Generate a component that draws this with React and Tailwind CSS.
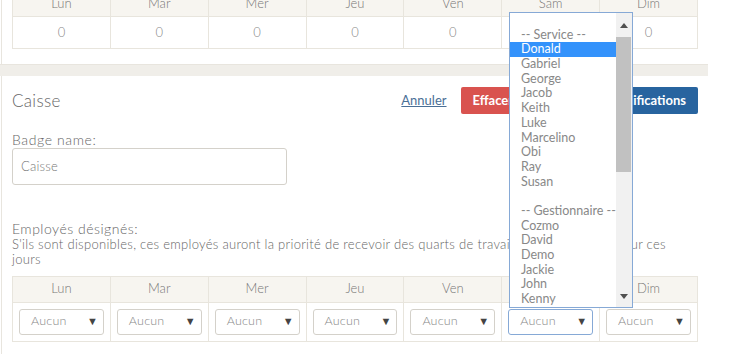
import React from "react";

const days = ["Lun", "Mar", "Mer", "Jeu", "Ven", "Sam", "Dim"];

const options = [
    "",
    "-- Service --",
    "Donald",
    "Gabriel",
    "George",
    "Jacob",
    "Keith",
    "Luke",
    "Marcelino",
    "Obi",
    "Ray",
    "Susan",
    "",
    "-- Gestionnaire --",
    "Cozmo",
    "David",
    "Demo",
    "Jackie",
    "John",
    "Kenny",
];

const font = { fontFamily: "Lato, 'Open Sans', sans-serif" };

const FakeSelect = ({ focused }) => (
    <div
        className={`h-[26px] flex items-center justify-between pl-[11px] pr-[5px] rounded-[3px] bg-white border ${
            focused ? "border-[#86a9d6]" : "border-[#d4d1ca]"
        }`}
    >
        <span className="text-[12.5px] text-[#888] tracking-[0.2px]">Aucun</span>
        <span className="text-[11px] text-[#444]">▼</span>
    </div>
);

const App = () => {
    return (
        <div
            className="relative w-[752px] h-[360px] overflow-hidden bg-white text-[#777] font-light"
            style={font}
        >
            <div className="w-[708px]">
                {/* carte du haut (coupée) */}
                <div className="ml-px border-l border-[#e8e5de] px-[10px] pb-[15px] -mt-[10px]">
                    <table className="w-full table-fixed border-collapse text-[13px]">
                        <thead>
                            <tr>
                                {days.map((d) => (
                                    <th
                                        key={d}
                                        className="h-[26px] font-light border border-[#e8e5dd] bg-[#f7f5f0] text-[#777]"
                                    >
                                        {d}
                                    </th>
                                ))}
                            </tr>
                        </thead>
                        <tbody>
                            <tr>
                                {days.map((d) => (
                                    <td
                                        key={d}
                                        className="h-[32px] text-center border border-[#e8e5dd] text-[#888]"
                                    >
                                        0
                                    </td>
                                ))}
                            </tr>
                        </tbody>
                    </table>
                </div>

                <div className="h-[12px] bg-[#f0eee9] border-t border-[#e8e5de]" />

                {/* carte Caisse */}
                <div className="ml-px border-l border-[#e8e5de] px-[10px] pt-[11px] pb-[12px]">
                    <div className="flex items-center justify-between h-[27px]">
                        <h2 className="text-[17px] text-[#666] tracking-[0.3px]">Caisse</h2>
                        <div className="flex items-center">
                            <a className="text-[13px] font-normal text-[#4a6f96] underline mr-[14px] cursor-pointer">
                                Annuler
                            </a>
                            <button className="h-[27px] px-3 rounded-[2px] bg-[#d9534f] text-white text-[13px] font-bold mr-1">
                                Effacer
                            </button>
                            <button className="h-[27px] px-3 rounded-[2px] bg-[#28649f] text-white text-[13px] font-bold">
                                Enregistrer modifications
                            </button>
                        </div>
                    </div>

                    <div className="mt-[17px] text-[14px] leading-[18px] text-[#666] tracking-[0.6px]">
                        Badge name:
                    </div>
                    <div className="w-[275px] h-[37px] mt-[-1px] border border-[#d4d1ca] rounded-[3px] flex items-center px-2 text-[13px] text-[#777] tracking-[0.2px]">
                        Caisse
                    </div>

                    <div className="mt-[36px] text-[13px] leading-[15.5px] text-[#666] tracking-[0.3px]">
                        <div className="text-[14px] tracking-[0.5px]">Employés désignés:</div>
                        <div>
                            S'ils sont disponibles, ces employés auront la priorité de recevoir des quarts de
                            travail de leurs badges, pour ces
                            <br />
                            jours
                        </div>
                    </div>

                    <table className="mt-[8px] w-full table-fixed border-collapse text-[13px]">
                        <thead>
                            <tr>
                                {days.map((d) => (
                                    <th
                                        key={d}
                                        className="h-[26px] font-light border border-[#e8e5dd] bg-[#f7f5f0] text-[#777]"
                                    >
                                        {d}
                                    </th>
                                ))}
                            </tr>
                        </thead>
                        <tbody>
                            <tr>
                                {days.map((d) => (
                                    <td key={d} className="h-[39px] px-[6px] border border-[#e8e5dd]">
                                        <FakeSelect focused={d === "Sam"} />
                                    </td>
                                ))}
                            </tr>
                        </tbody>
                    </table>
                </div>
            </div>

            {/* liste déroulante ouverte */}
            <div className="absolute left-[509px] top-[12px] w-[124px] h-[296px] bg-white border border-[#86a9d6] flex font-normal">
                <div className="flex-1">
                    {options.map((o, i) => (
                        <div
                            key={i}
                            className={`h-[14.7px] leading-[14.7px] pl-[11px] text-[12.5px] whitespace-nowrap ${
                                o === "Donald" ? "bg-[#3392fb] text-white" : "text-[#888]"
                            }`}
                        >
                            {o}
                        </div>
                    ))}
                </div>
                <div className="w-[17px] bg-[#f1f1f1] flex flex-col items-center">
                    <div className="h-[24px] flex items-center justify-center">
                        <svg width="8" height="5" viewBox="0 0 8 5">
                            <path d="M0 5 L4 0 L8 5 Z" fill="#505050" />
                        </svg>
                    </div>
                    <div className="w-[15px] h-[135px] bg-[#c1c1c1]" />
                    <div className="flex-1" />
                    <div className="h-[22px] flex items-center justify-center">
                        <svg width="8" height="5" viewBox="0 0 8 5">
                            <path d="M0 0 L8 0 L4 5 Z" fill="#505050" />
                        </svg>
                    </div>
                </div>
            </div>
        </div>
    );
};

export default App;
